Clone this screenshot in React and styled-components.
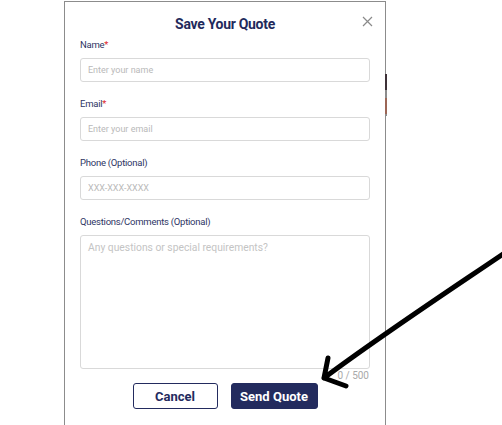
import React from "react";
import styled, { createGlobalStyle } from "styled-components";

const Global = createGlobalStyle`
  html, body { margin: 0; padding: 0; background: #fff; }
  body { font-family: Roboto, "Liberation Sans", sans-serif; }
  * { box-sizing: border-box; }
`;

const Page = styled.div`
  position: relative;
  width: 502px;
  height: 425px;
  overflow: hidden;
  padding-left: 64px;
  padding-top: 1px;
`;

const Modal = styled.div`
  position: relative;
  width: 322px;
  height: 440px;
  background: #fff;
  border: 1.5px solid #8c8c8c;
  padding: 0 15px;
  &::after {
    content: "";
    position: absolute;
    right: -1.5px;
    top: 72px;
    width: 1.5px;
    height: 42px;
    background: linear-gradient(
      to bottom,
      #3e3138 0,
      #3e3138 16px,
      #8c8c8c 16px,
      #8c8c8c 24px,
      #9c6656 24px,
      #9c6656 40px,
      #8c8c8c 40px
    );
  }
`;

const Header = styled.div`
  position: relative;
  padding-top: 13px;
  margin-bottom: 4px;
  text-align: center;
`;

const Title = styled.h2`
  margin: 0;
  font-size: 14px;
  line-height: 18px;
  letter-spacing: -0.3px;
  font-weight: 700;
  color: #1f2a5c;
`;

const Close = styled.button`
  position: absolute;
  right: -4px;
  top: 12px;
  width: 14px;
  height: 14px;
  padding: 0;
  border: none;
  background: none;
  display: flex;
  align-items: center;
  justify-content: center;
`;

const Form = styled.form`
  display: flex;
  flex-direction: column;
  gap: 14px;
`;

const Field = styled.div`
  display: flex;
  flex-direction: column;
  gap: 6px;
`;

const Label = styled.label`
  font-size: 9.5px;
  line-height: 15px;
  letter-spacing: -0.25px;
  color: #2e3564;
`;

const Req = styled.span`
  color: #e0262b;
`;

const Input = styled.input`
  height: 24px;
  border: 1px solid #d9d9d9;
  border-radius: 3px;
  padding: 0 7px;
  font-family: inherit;
  font-size: 9px;
  color: #333;
  outline: none;
  &::placeholder { color: #b9b9b9; }
`;

const TextArea = styled.textarea`
  height: 134px;
  border: 1px solid #d9d9d9;
  border-radius: 3px;
  padding: 5px 7px;
  font-family: inherit;
  font-size: 10.3px;
  resize: none;
  outline: none;
  &::placeholder { color: #c4c4c4; }
`;

const Counter = styled.div`
  text-align: right;
  font-size: 10px;
  line-height: 12px;
  color: #a9a9a9;
  padding-right: 1px;
  margin-top: -13px;
`;

const Actions = styled.div`
  display: flex;
  justify-content: center;
  gap: 13px;
  margin-top: -13px;
`;

const Button = styled.button`
  height: 26px;
  width: ${(p) => p.$w}px;
  border-radius: 3px;
  font-family: inherit;
  font-size: 13px;
  font-weight: 700;
  border: 1.5px solid #232b5e;
  background: ${(p) => (p.$primary ? "#232b5e" : "#fff")};
  color: ${(p) => (p.$primary ? "#fff" : "#232b5e")};
  padding: 0;
`;

const Arrow = styled.svg`
  position: absolute;
  left: 0;
  top: 0;
  pointer-events: none;
`;

export default function App() {
  return (
    <>
      <Global />
      <Page>
        <Modal>
          <Header>
            <Title>Save Your Quote</Title>
            <Close type="button" aria-label="Close">
              <svg width="11" height="11" viewBox="0 0 11 11">
                <path d="M1 1L10 10M10 1L1 10" stroke="#8a8a8a" strokeWidth="1.2" fill="none" />
              </svg>
            </Close>
          </Header>
          <Form onSubmit={(e) => e.preventDefault()}>
            <Field>
              <Label>
                Name<Req>*</Req>
              </Label>
              <Input placeholder="Enter your name" />
            </Field>
            <Field>
              <Label>
                Email<Req>*</Req>
              </Label>
              <Input placeholder="Enter your email" />
            </Field>
            <Field>
              <Label>Phone (Optional)</Label>
              <Input placeholder="XXX-XXX-XXXX" />
            </Field>
            <Field>
              <Label>Questions/Comments (Optional)</Label>
              <TextArea placeholder="Any questions or special requirements?" />
            </Field>
            <Counter>0 / 500</Counter>
            <Actions>
              <Button type="button" $w={85}>Cancel</Button>
              <Button type="submit" $primary $w={87}>Send Quote</Button>
            </Actions>
          </Form>
        </Modal>
        <Arrow width="502" height="425" viewBox="0 0 502 425">
          <path
            d="M506 252 C 450 290, 380 336, 324 378 M324 378 L328 358 M324 378 L346 386"
            stroke="#000"
            strokeWidth="5"
            strokeLinecap="round"
            strokeLinejoin="round"
            fill="none"
          />
        </Arrow>
      </Page>
    </>
  );
}
